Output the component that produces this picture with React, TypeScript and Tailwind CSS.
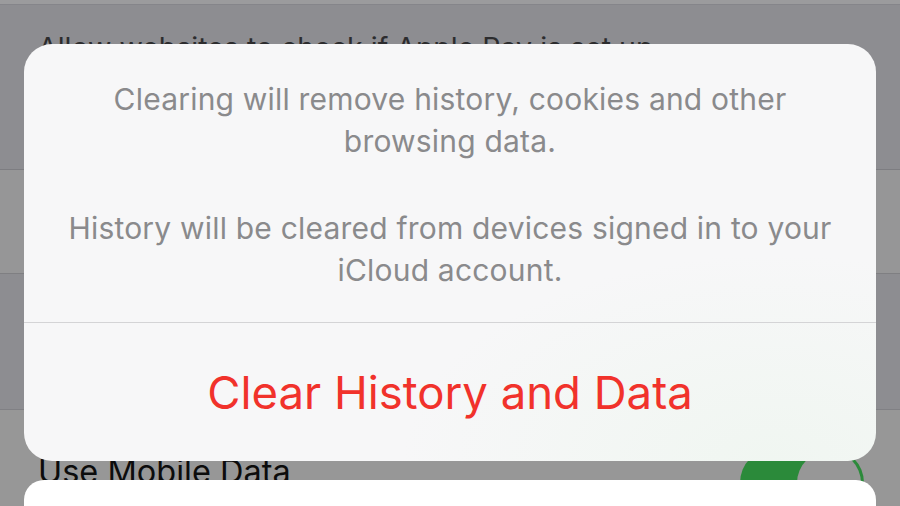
import React from "react";

const font = { fontFamily: "Inter, 'Noto Sans', sans-serif" };

const App = () => {
  return (
    <div
      className="relative w-[900px] h-[506px] overflow-hidden bg-[#979797]"
      style={font}
    >
      {/* settings list behind the sheet */}
      <div className="flex flex-col">
        <div className="h-[5px] bg-[#9b9b9d] border-b border-[#85858a]" />
        <div className="h-[165px] bg-[#8d8d91] border-b border-[#7d7d81] pl-[38px] pt-[25px]">
          <p className="text-[28.5px] leading-[36px] text-[#2c2c2e]">
            Allow websites to check if Apple Pay is set up
          </p>
        </div>
        <div className="h-[104px] bg-[#969697] border-b border-[#7f7f82]" />
        <div className="h-[136px] bg-[#8d8d91] border-b border-[#808084]" />
        <div className="flex items-center justify-between pl-[38px] pr-[36px] pt-[38px]">
          <p className="text-[32.5px] leading-[36px] text-[#0c0c0c] -mt-[22px]">Use Mobile Data</p>
          <div className="relative w-[124px] h-[70px] rounded-full bg-[#2b8a3a]">
            <div className="absolute right-[3px] top-[3px] w-[64px] h-[64px] rounded-full bg-[#979797]" />
          </div>
        </div>
      </div>

      {/* alert sheet */}
      <div className="absolute left-[24px] top-[44px] w-[852px] h-[417px] rounded-[28px] bg-[#f7f7f8] bg-[radial-gradient(ellipse_at_88%_100%,#f0f6f1_0%,#f7f7f8_35%)] flex flex-col">
        <div className="h-[279px] border-b border-[#d4d4d6] flex flex-col items-center pt-[34px] text-center text-[30px] leading-[42px] text-[#8a8a8c] tracking-[0.2px]">
          <p>
            Clearing will remove history, cookies and other
            <br />
            browsing data.
          </p>
          <p className="mt-[45px]">
            History will be cleared from devices signed in to your
            <br />
            iCloud account.
          </p>
        </div>
        <div className="flex-1 flex items-center justify-center pt-[2px]">
          <span className="text-[45.5px] text-[#f1322b]">Clear History and Data</span>
        </div>
      </div>

      {/* cancel card */}
      <div className="absolute left-[24px] top-[480px] w-[852px] h-[60px] rounded-t-[20px] bg-white" />
    </div>
  );
};

export default App;
